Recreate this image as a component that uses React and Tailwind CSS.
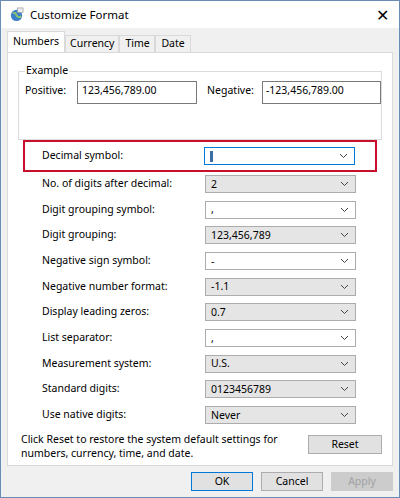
import React from "react";

// Customize Format dialog (Windows 10 style)

const rows = [
  { label: "No. of digits after decimal:", value: "2" },
  { label: "Digit grouping symbol:", value: ",", edit: true },
  { label: "Digit grouping:", value: "123,456,789" },
  { label: "Negative sign symbol:", value: "-", edit: true },
  { label: "Negative number format:", value: "-1.1" },
  { label: "Display leading zeros:", value: "0.7" },
  { label: "List separator:", value: ",", edit: true },
  { label: "Measurement system:", value: "U.S." },
  { label: "Standard digits:", value: "0123456789" },
  { label: "Use native digits:", value: "Never" },
];

function Chevron() {
  return (
    <svg width="9" height="6" viewBox="0 0 9 6" className="shrink-0">
      <path d="M1 1 L4.5 4.5 L8 1" fill="none" stroke="#444" strokeWidth="1" />
    </svg>
  );
}

function Combo({ value, edit, focus }) {
  return (
    <div
      className={
        "w-[151px] h-[18px] flex items-center justify-between pl-[5px] pr-[6px] border " +
        (focus
          ? "bg-white border-[#0078d7]"
          : edit
          ? "bg-white border-[#acacac]"
          : "bg-[#e5e5e5] border-[#acacac]")
      }
    >
      <span className="leading-none">
        {focus ? <span className="inline-block w-[3px] h-[11px] bg-[#3a6ea5] align-middle" /> : value}
      </span>
      <Chevron />
    </div>
  );
}

function Button({ children, primary, disabled, w = "w-[62px]" }) {
  return (
    <div
      className={
        w +
        " h-[19px] flex items-center justify-center border " +
        (primary
          ? "border-[#0078d7] bg-[#e1e1e1]"
          : disabled
          ? "border-[#cccccc] bg-[#cccccc] text-[#a0a0a0]"
          : "border-[#adadad] bg-[#e1e1e1]")
      }
    >
      {children}
    </div>
  );
}

export default function App() {
  return (
    <div
      className="w-[400px] h-[498px] bg-[#f0f0f0] border border-[#6a8db5] flex flex-col text-[10.5px] text-black"
      style={{ fontFamily: '"Noto Sans", "Open Sans", sans-serif' }}
    >
      {/* title bar */}
      <div className="h-[27px] bg-white flex items-center pl-[8px] pr-[10px]">
        <svg width="15" height="15" viewBox="0 0 16 16" className="mr-[6px]">
          <circle cx="8" cy="9" r="6" fill="#3d7fc9" />
          <path d="M4 7 Q7 5 8 9 Q10 12 13 10" fill="none" stroke="#8dc86d" strokeWidth="2" />
          <rect x="9" y="1" width="6" height="5" fill="#eaeaea" stroke="#888" strokeWidth="0.6" />
        </svg>
        <span className="text-[11.5px]">Customize Format</span>
        <span className="ml-auto text-[16px] leading-none font-light">✕</span>
      </div>

      {/* tabs */}
      <div className="flex items-end pl-[6px] h-[21px] mt-[3px]">
        <div className="h-[21px] px-[5px] bg-white border border-b-0 border-[#d9d9d9] flex items-center">Numbers</div>
        {["Currency", "Time", "Date"].map((t, i) => (
          <div
            key={t}
            className={
              "h-[17px] border border-b-0 border-[#d9d9d9] flex items-center " +
              (i === 0 ? "px-[4px]" : i === 1 ? "px-[5px] w-[36px]" : "px-[5px] w-[36px]")
            }
          >
            {t}
          </div>
        ))}
      </div>

      {/* tab panel */}
      <div className="mx-[6px] h-[414px] bg-white border border-[#d9d9d9] flex flex-col">
        {/* Example group */}
        <div className="relative mx-[10px] mt-[18px] h-[69px] border border-[#dcdcdc] flex items-start pt-[9px] pl-[6px]">
          <span className="absolute -top-[9px] left-[6px] bg-white px-[1px]">Example</span>
          <span className="mt-[2px]">Positive:</span>
          <div className="ml-[11px] w-[122px] h-[23px] border border-[#7a7a7a] pl-[4px] pt-[1px]">123,456,789.00</div>
          <span className="ml-[10px] mt-[2px]">Negative:</span>
          <div className="ml-[8px] w-[121px] h-[23px] border border-[#7a7a7a] pl-[3px] pt-[1px]">-123,456,789.00</div>
        </div>

        {/* highlighted decimal row */}
        <div className="mx-[15px] h-[32px] border-2 border-[#c8102e] flex items-center pl-[17px]">
          <span className="w-[162px]">Decimal symbol:</span>
          <Combo focus />
        </div>

        <div className="flex flex-col -mt-[1px]">
          {rows.map((r) => (
            <div key={r.label} className="h-[25.7px] flex items-center pl-[34px]">
              <span className="w-[163px]">{r.label}</span>
              <Combo value={r.value} edit={r.edit} />
            </div>
          ))}
        </div>

        <div className="flex items-start pl-[13px] pr-[10px] mt-[4px]">
          <p className="leading-[14px]">
            Click Reset to restore the system default settings for
            <br />
            numbers, currency, time, and date.
          </p>
          <div className="ml-auto mt-[3px]">
            <Button w="w-[74px]">Reset</Button>
          </div>
        </div>
      </div>

      {/* bottom buttons */}
      <div className="flex justify-end gap-[8px] pr-[6px] mt-[6px]">
        <Button primary>OK</Button>
        <Button>Cancel</Button>
        <Button disabled>Apply</Button>
      </div>
    </div>
  );
}
